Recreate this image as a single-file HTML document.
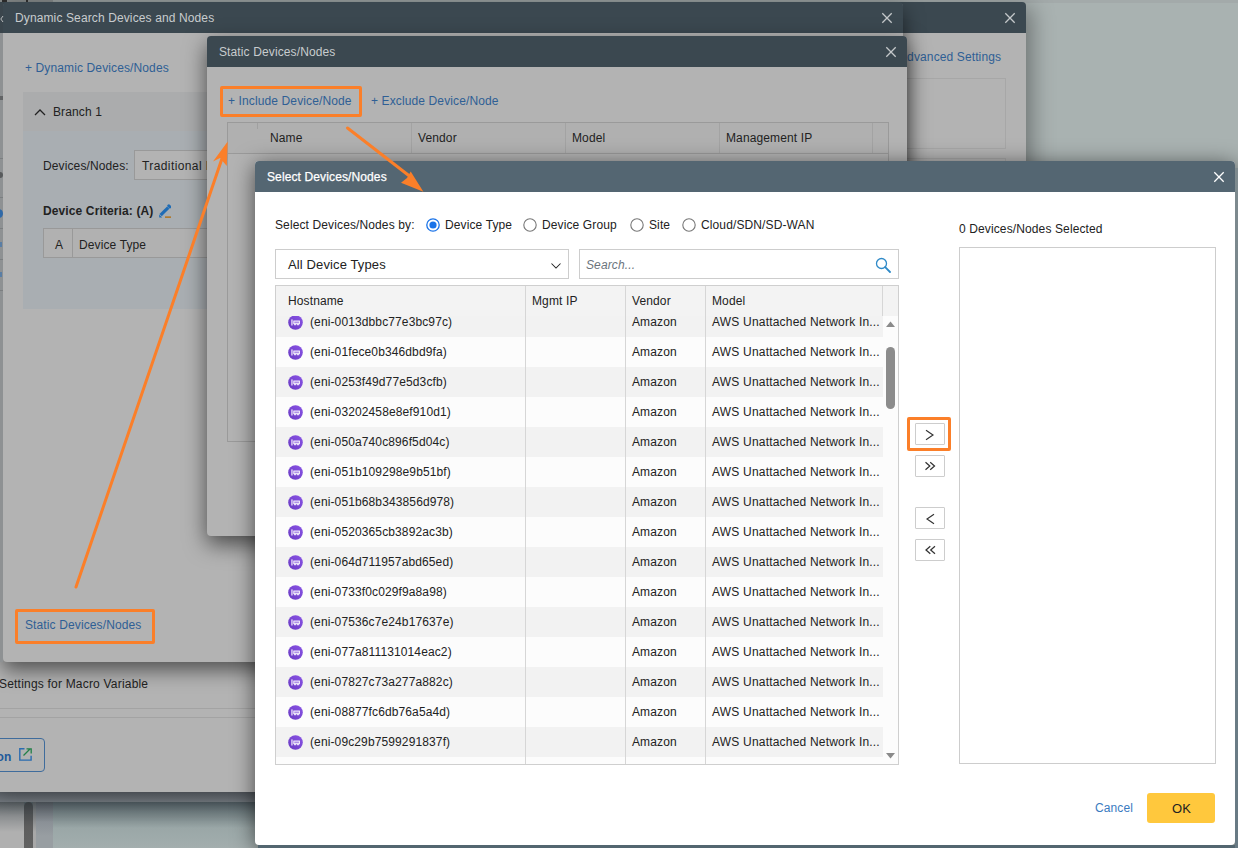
<!DOCTYPE html>
<html><head><meta charset="utf-8">
<style>
*{box-sizing:border-box;margin:0;padding:0}
html,body{width:1238px;height:848px;overflow:hidden}
body{position:relative;background:#a9b2b1;font-family:"Liberation Sans",sans-serif;font-size:12px;letter-spacing:0.12px;color:#222}
.abs{position:absolute}
.t{position:absolute;white-space:nowrap;line-height:14px}
/* page background */
#topstrip{left:0;top:0;width:1238px;height:3px;background:#a3aaaa}
#bottompage{left:0;top:792px;width:1238px;height:56px;background:linear-gradient(#4e5a60 10px,#6d7a7d 20px,#9aa7a7 36px,#a3aeae 56px)}
/* back dialog */
#back{left:-10px;top:3px;width:1036px;height:789px;background:#b3b3b3;border-radius:0 4px 0 0;box-shadow:6px 4px 22px rgba(0,0,0,.35)}
#backhdr{left:0;top:-1px;width:1036px;height:31px;background:#3b4850;border-radius:0 4px 0 0}
/* dynamic dialog */
#dyn{left:3px;top:3px;width:900px;height:659px;background:#b3b3b3;border-radius:4px 4px 4px 4px;box-shadow:0 8px 20px rgba(0,0,0,.55)}
#dynhdr{left:0;top:-1px;width:900px;height:31px;background:#3b4850;border-radius:4px 4px 0 0}
/* static dialog */
#stat{left:207px;top:36px;width:700px;height:500px;background:#b3b3b3;border-radius:4px;box-shadow:0 8px 22px rgba(0,0,0,.6)}
#stathdr{left:0;top:0;width:700px;height:31px;background:#3b4850;border-radius:4px 4px 0 0}
/* select dialog */
#sel{left:255px;top:161px;width:980px;height:684px;background:#fff;border-radius:4px;box-shadow:0 4px 22px rgba(0,0,0,.6)}
#selhdr{left:0;top:0;width:980px;height:31px;background:#546672;border-radius:4px 4px 0 0}
.x{position:absolute;width:12px;height:12px}
.link{color:#2f5f95}
.dimtitle{color:#c8ccce}
#tbl{left:20px;top:124px;width:624px;height:480px;border:1px solid #cfcfcf;background:#fcfcfc;overflow:hidden}
.row{position:absolute;left:0;width:607px;height:30px}
.row .ic{position:absolute;left:12px;top:8px;width:15px;height:15px}
.row .ic svg{display:block}
.row span.c1,.row span.c3,.row span.c4{position:absolute;top:8px;white-space:nowrap;line-height:14px;color:#222}
.c1{left:34px} .c3{left:356px} .c4{left:436px;letter-spacing:0.2px}
.vline{position:absolute;top:0;width:1px;height:480px;background:#d6d6d6}
.btn{position:absolute;left:660px;width:30px;height:22px;border:1px solid #cdcdcd;background:#fff;border-radius:1px}
.orange{position:absolute;border:3px solid #fb7f29;border-radius:2px}
</style></head><body>
<div id="topstrip" class="abs"></div>
<div class="abs" style="left:0;top:0;width:53px;height:3px;background:#8f9494"></div>
<div id="bottompage" class="abs"></div>
<div class="abs" style="left:0;top:792px;width:1026px;height:10px;background:linear-gradient(#60666d,#757b81)"></div>
<div class="abs" style="left:0;top:802px;width:24px;height:46px;background:linear-gradient(#555c60,#8b8e90 14px,#b0b0b0 30px)"></div>
<div class="abs" style="left:24px;top:802px;width:9px;height:50px;border-radius:4.5px;background:linear-gradient(#3c4246,#5d5d5d 25px,#636363)"></div>
<div class="abs" style="left:33px;top:802px;width:3px;height:46px;background:linear-gradient(#555c60,#a8a8a8 30px)"></div>
<div class="abs" style="left:36px;top:802px;width:17px;height:46px;background:linear-gradient(#4e555c,#8a9096 20px,#989ea2 34px)"></div>

<!-- back dialog -->
<div id="back" class="abs">
  <div id="backhdr" class="abs"></div>
  <svg class="x" style="left:1014px;top:9px" viewBox="0 0 12 12"><path d="M1.3 1.3L10.7 10.7M10.7 1.3L1.3 10.7" stroke="#c4c8ca" stroke-width="1.3"/></svg>
  <div class="t link" style="left:909px;top:47px;font-size:12px">Advanced Settings</div>
  <div class="abs" style="left:820px;top:75px;width:196px;height:71px;border:1px solid #a7a7a7"></div>
  <div class="abs" style="left:820px;top:155px;width:196px;height:40px;border:1px solid #a7a7a7"></div>
  <div class="t" style="left:9px;top:674px;color:#222;letter-spacing:0.2px">Settings for Macro Variable</div>
  <div class="abs" style="left:0;top:705px;width:1036px;height:1px;background:#a3a3a3"></div>
  <div class="abs" style="left:0;top:714px;width:1036px;height:1px;background:#a3a3a3"></div>
  <div class="abs" style="left:-20px;top:735px;width:75px;height:34px;border:1.3px solid #3f6c9c;border-radius:4px"></div>
  <div class="t" style="left:3px;top:747px;color:#21599a;font-weight:bold;font-size:12px">ion</div>
  <svg class="abs" style="left:29px;top:745px" width="14" height="14" viewBox="0 0 14 14"><path d="M5.5 0.8H0.8v11.3h11.3V7.8" stroke="#2a6cb0" stroke-width="1.4" fill="none"/><path d="M4.5 7.5L11 1M7.5 0.8h4.7v4.7" stroke="#238048" stroke-width="1.3" fill="none"/></svg>
</div>

<!-- dynamic dialog -->
<div id="dyn" class="abs">
  <div id="dynhdr" class="abs"></div>
  <div class="t dimtitle" style="left:12px;top:8px">Dynamic Search Devices and Nodes</div>
  <svg class="x" style="left:878px;top:9px" viewBox="0 0 12 12"><path d="M1.3 1.3L10.7 10.7M10.7 1.3L1.3 10.7" stroke="#c4c8ca" stroke-width="1.3"/></svg>
  <div class="t link" style="left:22px;top:58px">+ Dynamic Devices/Nodes</div>
  <div class="abs" style="left:20px;top:89px;width:880px;height:217px;background:#a9aeb2"></div>
  <div class="abs" style="left:20px;top:89px;width:880px;height:39px;background:#abacad"></div>
  <svg class="abs" style="left:31px;top:105px" width="12" height="8" viewBox="0 0 12 8"><path d="M1 7L6 2L11 7" stroke="#222" stroke-width="1.25" fill="none"/></svg>
  <div class="t" style="left:50px;top:102px">Branch 1</div>
  <div class="t" style="left:40px;top:156px">Devices/Nodes:</div>
  <div class="abs" style="left:131px;top:147px;width:300px;height:30px;border:1px solid #999;background:#b3b3b3"></div>
  <div class="t" style="left:139px;top:156px;letter-spacing:0.4px">Traditional Devices</div>
  <div class="t" style="left:40px;top:201px;font-weight:bold">Device Criteria: (A)</div>
  <svg class="abs" style="left:153px;top:200px" width="15" height="15" viewBox="0 0 15 15"><path d="M4.6 12.2L12.2 4.6" stroke="#1f6cb5" stroke-width="3.2"/><path d="M12.8 2.8l1.2 1.2" stroke="#1f6cb5" stroke-width="3" stroke-linecap="round"/><path d="M3.2 14.5v-3l3 3z" fill="#1f6cb5"/><path d="M9 14.2h7" stroke="#b07a2e" stroke-width="1.8"/></svg>
  <div class="abs" style="left:40px;top:225px;width:400px;height:30px;border:1px solid #999;background:#b1b1b1"></div>
  <div class="abs" style="left:69px;top:225px;width:1px;height:30px;background:#999"></div>
  <div class="t" style="left:52px;top:235px">A</div>
  <div class="t" style="left:76px;top:235px">Device Type</div>
  <div class="orange" style="left:12px;top:606px;width:140px;height:35px"></div>
  <div class="t link" style="left:22px;top:615px">Static Devices/Nodes</div>
</div>

<div class="abs" style="left:0;top:33px;width:3px;height:629px;background:#8e9193"></div>
<div class="abs" style="left:0;top:3px;width:3px;height:30px;background:#3a454c"></div>
<div class="abs" style="left:0;top:158px;width:3px;height:1px;background:#7c7f81"></div>
<div class="abs" style="left:0;top:197px;width:3px;height:1px;background:#7c7f81"></div>
<div class="abs" style="left:0;top:228px;width:3px;height:1px;background:#7c7f81"></div>
<div class="abs" style="left:0;top:259px;width:3px;height:1px;background:#7c7f81"></div>
<div class="abs" style="left:0;top:290px;width:3px;height:1px;background:#7c7f81"></div>
<div class="abs" style="left:2px;top:0;width:5px;height:2px;background:#2a2a2a"></div>
<div class="abs" style="left:26px;top:0;width:2px;height:2px;background:#2a2a2a"></div>
<svg class="abs" style="left:0;top:15px" width="4" height="8" viewBox="0 0 4 8"><path d="M3 1L0.8 4L3 7" stroke="#b9bcbe" stroke-width="1" fill="none"/></svg>
<div class="abs" style="left:0;top:96px;width:3px;height:4px;background:#626466"></div>
<div class="abs" style="left:0;top:172px;width:3px;height:6px;background:#585a5c;border-radius:0 3px 3px 0"></div>
<div class="abs" style="left:-5px;top:209px;width:8px;height:9px;border-radius:50%;background:#2f69a8"></div>
<div class="abs" style="left:0;top:242px;width:2px;height:5px;background:#5a7ea5"></div>
<div class="abs" style="left:0;top:272px;width:2px;height:5px;background:#5a7ea5"></div>
<!-- static dialog -->
<div id="stat" class="abs">
  <div id="stathdr" class="abs"></div>
  <div class="t dimtitle" style="left:12px;top:9px">Static Devices/Nodes</div>
  <svg class="x" style="left:678px;top:10px" viewBox="0 0 12 12"><path d="M1.3 1.3L10.7 10.7M10.7 1.3L1.3 10.7" stroke="#c4c8ca" stroke-width="1.3"/></svg>
  <div class="t link" style="left:21px;top:58px">+ Include Device/Node</div>
  <div class="t link" style="left:164px;top:58px">+ Exclude Device/Node</div>
  <div class="abs" style="left:20px;top:86px;width:662px;height:320px;border:1px solid #9a9a9a"></div>
  <div class="abs" style="left:21px;top:87px;width:660px;height:31px;background:#b0b0b0;border-bottom:1px solid #9a9a9a"></div>
  <div class="abs" style="left:50px;top:87px;width:1px;height:6px;background:#a0a0a0"></div>
  <div class="abs" style="left:204px;top:87px;width:1px;height:30px;background:#a3a3a3"></div>
  <div class="abs" style="left:358px;top:87px;width:1px;height:30px;background:#a3a3a3"></div>
  <div class="abs" style="left:512px;top:87px;width:1px;height:30px;background:#a3a3a3"></div>
  <div class="abs" style="left:665px;top:87px;width:1px;height:30px;background:#a3a3a3"></div>
  <div class="t" style="left:63px;top:95px">Name</div>
  <div class="t" style="left:211px;top:95px">Vendor</div>
  <div class="t" style="left:365px;top:95px">Model</div>
  <div class="t" style="left:519px;top:95px">Management IP</div>
</div>

<!-- select dialog -->
<div id="sel" class="abs">
  <div id="selhdr" class="abs"></div>
  <div class="t" style="left:12px;top:9px;color:#fff;-webkit-text-stroke:0.25px #fff">Select Devices/Nodes</div>
  <svg class="x" style="left:958px;top:10px" viewBox="0 0 12 12"><path d="M1.3 1.3L10.7 10.7M10.7 1.3L1.3 10.7" stroke="#fff" stroke-width="1.3"/></svg>
  <div class="t" style="left:20px;top:57px;color:#222">Select Devices/Nodes by:</div>
  <svg class="abs" style="left:171px;top:57px" width="14" height="14" viewBox="0 0 14 14"><circle cx="7" cy="7" r="6.2" fill="#fff" stroke="#1a73e8" stroke-width="1.3"/><circle cx="7" cy="7" r="3.6" fill="#1a73e8"/></svg>
  <div class="t" style="left:190px;top:57px;color:#222">Device Type</div>
  <svg class="abs" style="left:268px;top:57px" width="14" height="14" viewBox="0 0 14 14"><circle cx="7" cy="7" r="6.2" fill="#fff" stroke="#777" stroke-width="1.1"/></svg>
  <div class="t" style="left:287px;top:57px;color:#222">Device Group</div>
  <svg class="abs" style="left:375px;top:57px" width="14" height="14" viewBox="0 0 14 14"><circle cx="7" cy="7" r="6.2" fill="#fff" stroke="#777" stroke-width="1.1"/></svg>
  <div class="t" style="left:394px;top:57px;color:#222">Site</div>
  <svg class="abs" style="left:427px;top:57px" width="14" height="14" viewBox="0 0 14 14"><circle cx="7" cy="7" r="6.2" fill="#fff" stroke="#777" stroke-width="1.1"/></svg>
  <div class="t" style="left:446px;top:57px;color:#222">Cloud/SDN/SD-WAN</div>
  <div class="abs" style="left:20px;top:88px;width:294px;height:30px;border:1px solid #cdcdcd"></div>
  <div class="t" style="left:33px;top:97px;font-size:13px;color:#222">All Device Types</div>
  <svg class="abs" style="left:296px;top:102px" width="10" height="6" viewBox="0 0 10 6"><path d="M.5 .5L5 5L9.5 .5" stroke="#222" stroke-width="1.05" fill="none"/></svg>
  <div class="abs" style="left:324px;top:88px;width:320px;height:30px;border:1px solid #cdcdcd"></div>
  <div class="t" style="left:331px;top:97px;font-style:italic;color:#6b747c">Search...</div>
  <svg class="abs" style="left:620px;top:96px" width="16" height="16" viewBox="0 0 16 16"><circle cx="6.5" cy="6.5" r="5" stroke="#2f8ac8" stroke-width="1.3" fill="none"/><path d="M10.2 10.2L15 15" stroke="#2f8ac8" stroke-width="1.8" stroke-linecap="round"/></svg>

  <div id="tbl" class="abs">
<div class="row" style="top:21px;background:#f2f2f2"><span class="ic"><svg width="15" height="15" viewBox="0 0 15 15"><defs><linearGradient id="g" x1="1" y1="0" x2="0" y2="1"><stop offset="0" stop-color="#8b55e6"/><stop offset="1" stop-color="#6739c2"/></linearGradient></defs><circle cx="7.5" cy="7.5" r="7.3" fill="url(#g)"/><rect x="3.4" y="4.4" width="1.1" height="6.1" fill="#fff"/><rect x="5.8" y="6" width="5.6" height="2.7" fill="#fff" fill-opacity=".4" stroke="#fff" stroke-width=".9"/><rect x="6" y="9.2" width="2.2" height="1" fill="#fff"/><rect x="9" y="9.2" width="2.2" height="1" fill="#fff"/></svg></span><span class="c1">(eni-0013dbbc77e3bc97c)</span><span class="c3">Amazon</span><span class="c4">AWS Unattached Network In...</span></div>
<div class="row" style="top:51px;background:#fcfcfc"><span class="ic"><svg width="15" height="15" viewBox="0 0 15 15"><defs><linearGradient id="g" x1="1" y1="0" x2="0" y2="1"><stop offset="0" stop-color="#8b55e6"/><stop offset="1" stop-color="#6739c2"/></linearGradient></defs><circle cx="7.5" cy="7.5" r="7.3" fill="url(#g)"/><rect x="3.4" y="4.4" width="1.1" height="6.1" fill="#fff"/><rect x="5.8" y="6" width="5.6" height="2.7" fill="#fff" fill-opacity=".4" stroke="#fff" stroke-width=".9"/><rect x="6" y="9.2" width="2.2" height="1" fill="#fff"/><rect x="9" y="9.2" width="2.2" height="1" fill="#fff"/></svg></span><span class="c1">(eni-01fece0b346dbd9fa)</span><span class="c3">Amazon</span><span class="c4">AWS Unattached Network In...</span></div>
<div class="row" style="top:81px;background:#f2f2f2"><span class="ic"><svg width="15" height="15" viewBox="0 0 15 15"><defs><linearGradient id="g" x1="1" y1="0" x2="0" y2="1"><stop offset="0" stop-color="#8b55e6"/><stop offset="1" stop-color="#6739c2"/></linearGradient></defs><circle cx="7.5" cy="7.5" r="7.3" fill="url(#g)"/><rect x="3.4" y="4.4" width="1.1" height="6.1" fill="#fff"/><rect x="5.8" y="6" width="5.6" height="2.7" fill="#fff" fill-opacity=".4" stroke="#fff" stroke-width=".9"/><rect x="6" y="9.2" width="2.2" height="1" fill="#fff"/><rect x="9" y="9.2" width="2.2" height="1" fill="#fff"/></svg></span><span class="c1">(eni-0253f49d77e5d3cfb)</span><span class="c3">Amazon</span><span class="c4">AWS Unattached Network In...</span></div>
<div class="row" style="top:111px;background:#fcfcfc"><span class="ic"><svg width="15" height="15" viewBox="0 0 15 15"><defs><linearGradient id="g" x1="1" y1="0" x2="0" y2="1"><stop offset="0" stop-color="#8b55e6"/><stop offset="1" stop-color="#6739c2"/></linearGradient></defs><circle cx="7.5" cy="7.5" r="7.3" fill="url(#g)"/><rect x="3.4" y="4.4" width="1.1" height="6.1" fill="#fff"/><rect x="5.8" y="6" width="5.6" height="2.7" fill="#fff" fill-opacity=".4" stroke="#fff" stroke-width=".9"/><rect x="6" y="9.2" width="2.2" height="1" fill="#fff"/><rect x="9" y="9.2" width="2.2" height="1" fill="#fff"/></svg></span><span class="c1">(eni-03202458e8ef910d1)</span><span class="c3">Amazon</span><span class="c4">AWS Unattached Network In...</span></div>
<div class="row" style="top:141px;background:#f2f2f2"><span class="ic"><svg width="15" height="15" viewBox="0 0 15 15"><defs><linearGradient id="g" x1="1" y1="0" x2="0" y2="1"><stop offset="0" stop-color="#8b55e6"/><stop offset="1" stop-color="#6739c2"/></linearGradient></defs><circle cx="7.5" cy="7.5" r="7.3" fill="url(#g)"/><rect x="3.4" y="4.4" width="1.1" height="6.1" fill="#fff"/><rect x="5.8" y="6" width="5.6" height="2.7" fill="#fff" fill-opacity=".4" stroke="#fff" stroke-width=".9"/><rect x="6" y="9.2" width="2.2" height="1" fill="#fff"/><rect x="9" y="9.2" width="2.2" height="1" fill="#fff"/></svg></span><span class="c1">(eni-050a740c896f5d04c)</span><span class="c3">Amazon</span><span class="c4">AWS Unattached Network In...</span></div>
<div class="row" style="top:171px;background:#fcfcfc"><span class="ic"><svg width="15" height="15" viewBox="0 0 15 15"><defs><linearGradient id="g" x1="1" y1="0" x2="0" y2="1"><stop offset="0" stop-color="#8b55e6"/><stop offset="1" stop-color="#6739c2"/></linearGradient></defs><circle cx="7.5" cy="7.5" r="7.3" fill="url(#g)"/><rect x="3.4" y="4.4" width="1.1" height="6.1" fill="#fff"/><rect x="5.8" y="6" width="5.6" height="2.7" fill="#fff" fill-opacity=".4" stroke="#fff" stroke-width=".9"/><rect x="6" y="9.2" width="2.2" height="1" fill="#fff"/><rect x="9" y="9.2" width="2.2" height="1" fill="#fff"/></svg></span><span class="c1">(eni-051b109298e9b51bf)</span><span class="c3">Amazon</span><span class="c4">AWS Unattached Network In...</span></div>
<div class="row" style="top:201px;background:#f2f2f2"><span class="ic"><svg width="15" height="15" viewBox="0 0 15 15"><defs><linearGradient id="g" x1="1" y1="0" x2="0" y2="1"><stop offset="0" stop-color="#8b55e6"/><stop offset="1" stop-color="#6739c2"/></linearGradient></defs><circle cx="7.5" cy="7.5" r="7.3" fill="url(#g)"/><rect x="3.4" y="4.4" width="1.1" height="6.1" fill="#fff"/><rect x="5.8" y="6" width="5.6" height="2.7" fill="#fff" fill-opacity=".4" stroke="#fff" stroke-width=".9"/><rect x="6" y="9.2" width="2.2" height="1" fill="#fff"/><rect x="9" y="9.2" width="2.2" height="1" fill="#fff"/></svg></span><span class="c1">(eni-051b68b343856d978)</span><span class="c3">Amazon</span><span class="c4">AWS Unattached Network In...</span></div>
<div class="row" style="top:231px;background:#fcfcfc"><span class="ic"><svg width="15" height="15" viewBox="0 0 15 15"><defs><linearGradient id="g" x1="1" y1="0" x2="0" y2="1"><stop offset="0" stop-color="#8b55e6"/><stop offset="1" stop-color="#6739c2"/></linearGradient></defs><circle cx="7.5" cy="7.5" r="7.3" fill="url(#g)"/><rect x="3.4" y="4.4" width="1.1" height="6.1" fill="#fff"/><rect x="5.8" y="6" width="5.6" height="2.7" fill="#fff" fill-opacity=".4" stroke="#fff" stroke-width=".9"/><rect x="6" y="9.2" width="2.2" height="1" fill="#fff"/><rect x="9" y="9.2" width="2.2" height="1" fill="#fff"/></svg></span><span class="c1">(eni-0520365cb3892ac3b)</span><span class="c3">Amazon</span><span class="c4">AWS Unattached Network In...</span></div>
<div class="row" style="top:261px;background:#f2f2f2"><span class="ic"><svg width="15" height="15" viewBox="0 0 15 15"><defs><linearGradient id="g" x1="1" y1="0" x2="0" y2="1"><stop offset="0" stop-color="#8b55e6"/><stop offset="1" stop-color="#6739c2"/></linearGradient></defs><circle cx="7.5" cy="7.5" r="7.3" fill="url(#g)"/><rect x="3.4" y="4.4" width="1.1" height="6.1" fill="#fff"/><rect x="5.8" y="6" width="5.6" height="2.7" fill="#fff" fill-opacity=".4" stroke="#fff" stroke-width=".9"/><rect x="6" y="9.2" width="2.2" height="1" fill="#fff"/><rect x="9" y="9.2" width="2.2" height="1" fill="#fff"/></svg></span><span class="c1">(eni-064d711957abd65ed)</span><span class="c3">Amazon</span><span class="c4">AWS Unattached Network In...</span></div>
<div class="row" style="top:291px;background:#fcfcfc"><span class="ic"><svg width="15" height="15" viewBox="0 0 15 15"><defs><linearGradient id="g" x1="1" y1="0" x2="0" y2="1"><stop offset="0" stop-color="#8b55e6"/><stop offset="1" stop-color="#6739c2"/></linearGradient></defs><circle cx="7.5" cy="7.5" r="7.3" fill="url(#g)"/><rect x="3.4" y="4.4" width="1.1" height="6.1" fill="#fff"/><rect x="5.8" y="6" width="5.6" height="2.7" fill="#fff" fill-opacity=".4" stroke="#fff" stroke-width=".9"/><rect x="6" y="9.2" width="2.2" height="1" fill="#fff"/><rect x="9" y="9.2" width="2.2" height="1" fill="#fff"/></svg></span><span class="c1">(eni-0733f0c029f9a8a98)</span><span class="c3">Amazon</span><span class="c4">AWS Unattached Network In...</span></div>
<div class="row" style="top:321px;background:#f2f2f2"><span class="ic"><svg width="15" height="15" viewBox="0 0 15 15"><defs><linearGradient id="g" x1="1" y1="0" x2="0" y2="1"><stop offset="0" stop-color="#8b55e6"/><stop offset="1" stop-color="#6739c2"/></linearGradient></defs><circle cx="7.5" cy="7.5" r="7.3" fill="url(#g)"/><rect x="3.4" y="4.4" width="1.1" height="6.1" fill="#fff"/><rect x="5.8" y="6" width="5.6" height="2.7" fill="#fff" fill-opacity=".4" stroke="#fff" stroke-width=".9"/><rect x="6" y="9.2" width="2.2" height="1" fill="#fff"/><rect x="9" y="9.2" width="2.2" height="1" fill="#fff"/></svg></span><span class="c1">(eni-07536c7e24b17637e)</span><span class="c3">Amazon</span><span class="c4">AWS Unattached Network In...</span></div>
<div class="row" style="top:351px;background:#fcfcfc"><span class="ic"><svg width="15" height="15" viewBox="0 0 15 15"><defs><linearGradient id="g" x1="1" y1="0" x2="0" y2="1"><stop offset="0" stop-color="#8b55e6"/><stop offset="1" stop-color="#6739c2"/></linearGradient></defs><circle cx="7.5" cy="7.5" r="7.3" fill="url(#g)"/><rect x="3.4" y="4.4" width="1.1" height="6.1" fill="#fff"/><rect x="5.8" y="6" width="5.6" height="2.7" fill="#fff" fill-opacity=".4" stroke="#fff" stroke-width=".9"/><rect x="6" y="9.2" width="2.2" height="1" fill="#fff"/><rect x="9" y="9.2" width="2.2" height="1" fill="#fff"/></svg></span><span class="c1">(eni-077a811131014eac2)</span><span class="c3">Amazon</span><span class="c4">AWS Unattached Network In...</span></div>
<div class="row" style="top:381px;background:#f2f2f2"><span class="ic"><svg width="15" height="15" viewBox="0 0 15 15"><defs><linearGradient id="g" x1="1" y1="0" x2="0" y2="1"><stop offset="0" stop-color="#8b55e6"/><stop offset="1" stop-color="#6739c2"/></linearGradient></defs><circle cx="7.5" cy="7.5" r="7.3" fill="url(#g)"/><rect x="3.4" y="4.4" width="1.1" height="6.1" fill="#fff"/><rect x="5.8" y="6" width="5.6" height="2.7" fill="#fff" fill-opacity=".4" stroke="#fff" stroke-width=".9"/><rect x="6" y="9.2" width="2.2" height="1" fill="#fff"/><rect x="9" y="9.2" width="2.2" height="1" fill="#fff"/></svg></span><span class="c1">(eni-07827c73a277a882c)</span><span class="c3">Amazon</span><span class="c4">AWS Unattached Network In...</span></div>
<div class="row" style="top:411px;background:#fcfcfc"><span class="ic"><svg width="15" height="15" viewBox="0 0 15 15"><defs><linearGradient id="g" x1="1" y1="0" x2="0" y2="1"><stop offset="0" stop-color="#8b55e6"/><stop offset="1" stop-color="#6739c2"/></linearGradient></defs><circle cx="7.5" cy="7.5" r="7.3" fill="url(#g)"/><rect x="3.4" y="4.4" width="1.1" height="6.1" fill="#fff"/><rect x="5.8" y="6" width="5.6" height="2.7" fill="#fff" fill-opacity=".4" stroke="#fff" stroke-width=".9"/><rect x="6" y="9.2" width="2.2" height="1" fill="#fff"/><rect x="9" y="9.2" width="2.2" height="1" fill="#fff"/></svg></span><span class="c1">(eni-08877fc6db76a5a4d)</span><span class="c3">Amazon</span><span class="c4">AWS Unattached Network In...</span></div>
<div class="row" style="top:441px;background:#f2f2f2"><span class="ic"><svg width="15" height="15" viewBox="0 0 15 15"><defs><linearGradient id="g" x1="1" y1="0" x2="0" y2="1"><stop offset="0" stop-color="#8b55e6"/><stop offset="1" stop-color="#6739c2"/></linearGradient></defs><circle cx="7.5" cy="7.5" r="7.3" fill="url(#g)"/><rect x="3.4" y="4.4" width="1.1" height="6.1" fill="#fff"/><rect x="5.8" y="6" width="5.6" height="2.7" fill="#fff" fill-opacity=".4" stroke="#fff" stroke-width=".9"/><rect x="6" y="9.2" width="2.2" height="1" fill="#fff"/><rect x="9" y="9.2" width="2.2" height="1" fill="#fff"/></svg></span><span class="c1">(eni-09c29b7599291837f)</span><span class="c3">Amazon</span><span class="c4">AWS Unattached Network In...</span></div>
<div class="row" style="top:471px;background:#fcfcfc"></div>
    <div class="abs" style="left:0;top:0;width:622px;height:30px;background:#f3f3f3"></div>
    <div class="vline" style="left:249px"></div>
    <div class="vline" style="left:349px"></div>
    <div class="vline" style="left:429px"></div>
    <div class="vline" style="left:606px;height:30px"></div>
    <div class="t" style="left:12px;top:8px;color:#222">Hostname</div>
    <div class="t" style="left:256px;top:8px;color:#222">Mgmt IP</div>
    <div class="t" style="left:356px;top:8px;color:#222">Vendor</div>
    <div class="t" style="left:436px;top:8px;color:#222">Model</div>
    <svg class="abs" style="left:610px;top:35px" width="9" height="6" viewBox="0 0 9 6"><path d="M0 6L4.5 0.5L9 6z" fill="#8a8a8a"/></svg>
    <div class="abs" style="left:610px;top:61px;width:9px;height:62px;background:#8c8c8c;border-radius:4.5px"></div>
    <svg class="abs" style="left:610px;top:467px" width="9" height="6" viewBox="0 0 9 6"><path d="M0 0L4.5 5.5L9 0z" fill="#8a8a8a"/></svg>
  </div>

  <div class="btn" style="top:262px"></div>
  <div class="btn" style="top:294px"></div>
  <div class="btn" style="top:346px"></div>
  <div class="btn" style="top:378px"></div>
  <svg class="abs" style="left:670px;top:268px" width="10" height="12" viewBox="0 0 10 12"><path d="M1 1.2L8 6L1 10.8" stroke="#333" stroke-width="1.15" fill="none"/></svg>
  <svg class="abs" style="left:668px;top:300px" width="14" height="10" viewBox="0 0 14 10"><path d="M2.5 1.3L6.8 5L2.5 8.7M7.2 1.3L11.5 5L7.2 8.7" stroke="#333" stroke-width="1.25" fill="none"/></svg>
  <svg class="abs" style="left:670px;top:352px" width="10" height="12" viewBox="0 0 10 12"><path d="M9 1.2L2 6L9 10.8" stroke="#333" stroke-width="1.15" fill="none"/></svg>
  <svg class="abs" style="left:668px;top:384px" width="14" height="10" viewBox="0 0 14 10"><path d="M12 1.3L7.7 5L12 8.7M7.3 1.3L3 5L7.3 8.7" stroke="#333" stroke-width="1.25" fill="none"/></svg>
  <div class="orange" style="left:652px;top:256px;width:44px;height:34px"></div>

  <div class="t" style="left:704px;top:61px;color:#222">0 Devices/Nodes Selected</div>
  <div class="abs" style="left:704px;top:86px;width:257px;height:517px;border:1px solid #cdcdcd"></div>
  <div class="t" style="left:840px;top:640px;color:#3a7bbf">Cancel</div>
  <div class="abs" style="left:892px;top:632px;width:68px;height:30px;background:#ffc83d;border-radius:3px"></div>
  <div class="t" style="left:917px;top:641px;color:#222;font-size:13px">OK</div>
</div>

<div class="abs" style="left:1235px;top:168px;width:3px;height:680px;background:linear-gradient(#7f8b8f,#6f7f87 50%,#687a84)"></div>
<div class="abs" style="left:258px;top:845px;width:977px;height:3px;background:#536670"></div>
<!-- annotations -->
<div class="orange" style="left:220px;top:86px;width:142px;height:31px"></div>
<svg class="abs" style="left:0;top:0" width="1238" height="848" viewBox="0 0 1238 848">
  <path d="M76 587L221.5 160" stroke="#fb7f29" stroke-width="3" stroke-linecap="round" fill="none"/>
  <path d="M227.7 141.6L213 161.4L220 158L226.8 166.1z" fill="#fb7f29"/>
  <path d="M347.5 128L412 178" stroke="#fb7f29" stroke-width="3" stroke-linecap="round" fill="none"/>
  <path d="M423.4 191.8L401 182.7L407 178L410.7 171.4z" fill="#fb7f29"/>
</svg>
</body></html>
